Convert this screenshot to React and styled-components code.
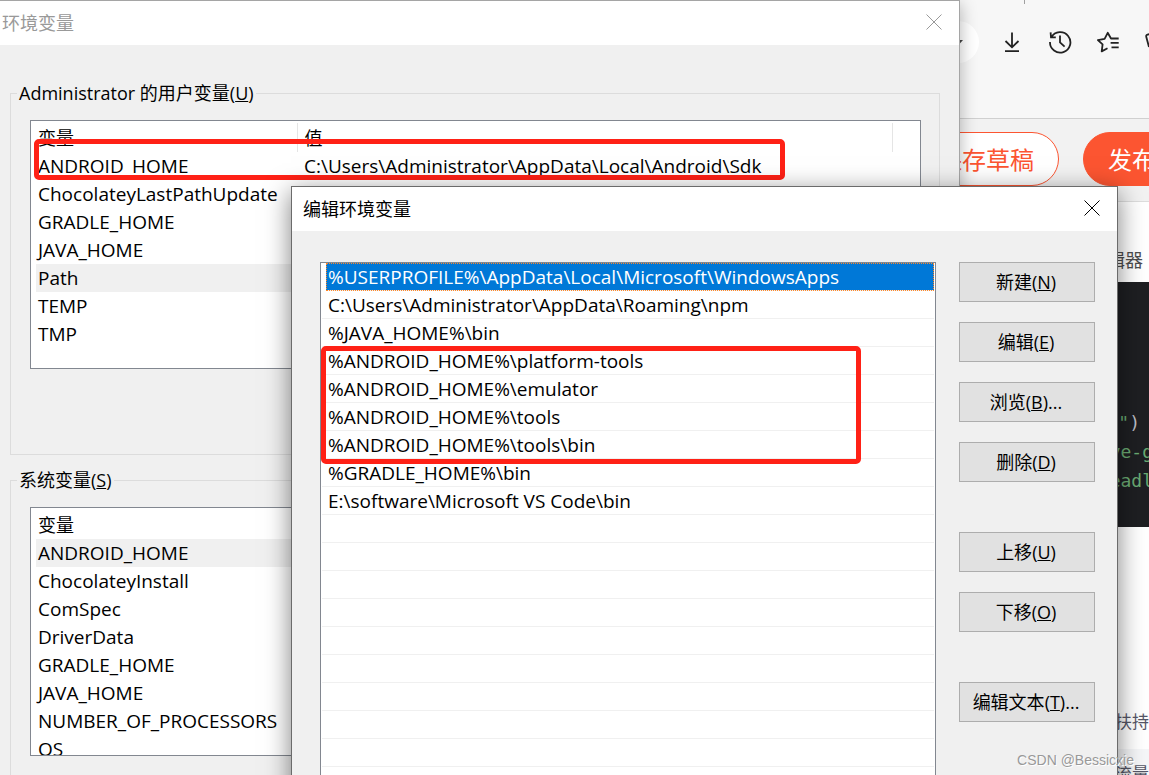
import React from 'react'
import styled, { createGlobalStyle } from 'styled-components'

const Global = createGlobalStyle`
  * {
    box-sizing: border-box;
  }
  body {
    margin: 0;
    color: #000;
    font-size: 18px;
    font-family: 'Open Sans', 'Noto Sans CJK SC', sans-serif;
  }
  button {
    font: inherit;
    color: inherit;
    cursor: pointer;
  }
`

const userVars = [
  ['ANDROID_HOME', 'C:\\Users\\Administrator\\AppData\\Local\\Android\\Sdk'],
  ['ChocolateyLastPathUpdate', ''],
  ['GRADLE_HOME', ''],
  ['JAVA_HOME', ''],
  ['Path', ''],
  ['TEMP', ''],
  ['TMP', ''],
]

const systemVars = [
  ['ANDROID_HOME', ''],
  ['ChocolateyInstall', ''],
  ['ComSpec', ''],
  ['DriverData', ''],
  ['GRADLE_HOME', ''],
  ['JAVA_HOME', ''],
  ['NUMBER_OF_PROCESSORS', ''],
  ['OS', ''],
]

const paths = [
  '%USERPROFILE%\\AppData\\Local\\Microsoft\\WindowsApps',
  'C:\\Users\\Administrator\\AppData\\Roaming\\npm',
  '%JAVA_HOME%\\bin',
  '%ANDROID_HOME%\\platform-tools',
  '%ANDROID_HOME%\\emulator',
  '%ANDROID_HOME%\\tools',
  '%ANDROID_HOME%\\tools\\bin',
  '%GRADLE_HOME%\\bin',
  'E:\\software\\Microsoft VS Code\\bin',
]

const actions = [
  { label: '新建', hotkey: 'N' },
  { label: '编辑', hotkey: 'E' },
  { label: '浏览', hotkey: 'B', more: true },
  { label: '删除', hotkey: 'D' },
  { label: '上移', hotkey: 'U', group: true },
  { label: '下移', hotkey: 'O' },
  { label: '编辑文本', hotkey: 'T', more: true, group: true },
]

const Hotkey = ({ label, hotkey, more }) => (
  <>
    {label}(<u>{hotkey}</u>){more && '...'}
  </>
)

const CloseIcon = () => (
  <svg width="16" height="16" viewBox="0 0 16 16" fill="none" stroke="currentColor">
    <path d="M.5 .5 15.5 15.5M15.5 .5 .5 15.5" />
  </svg>
)

const CaretIcon = () => (
  <svg width="8" height="5" viewBox="0 0 8 5" fill="#444">
    <path d="M0 0H8L4 4.5Z" />
  </svg>
)

const DownloadIcon = () => (
  <svg width="24" height="24" viewBox="0 0 24 24" fill="none" stroke="currentColor" strokeWidth="1.8">
    <path d="M12 2.5V17M5.5 11 12 17.3 18.5 11M5 21.1H19" />
  </svg>
)

const HistoryIcon = () => (
  <svg width="24" height="24" viewBox="0 0 24 24" fill="none" stroke="currentColor" strokeWidth="1.8">
    <path d="M3.4 7.2A10.2 10.2 0 1 1 2 12M2.6 2.4 3 7.4H7.8M12 5.6V12.4L16.6 16.6" />
  </svg>
)

const FavoritesIcon = () => (
  <svg width="24" height="24" viewBox="0 0 24 24" fill="none" stroke="currentColor" strokeWidth="1.8" strokeLinejoin="round">
    <path d="M22.7 8.5H15L11.7 2.8 8.6 8.8 1.9 10.1 6.6 14.4 5.7 21.4 11.5 18.3M14.6 12.9H22.7M15.5 17.4H22.7" />
  </svg>
)

const CollectionIcon = () => (
  <svg width="24" height="24" viewBox="0 0 24 24" fill="none" stroke="currentColor" strokeWidth="1.8">
    <path d="M5 17 2.3 7Q1.8 5 3.5 4.6L12 2.5M7 6H20V20H8Z" />
  </svg>
)

const VarList = ({ rows, selected }) => (
  <VarTable>
    <thead>
      <tr>
        <th>变量</th>
        <th>值</th>
        <th />
      </tr>
    </thead>
    <tbody>
      {rows.map(([name, value]) => (
        <VarRow key={name} $selected={name === selected}>
          <td>{name}</td>
          <td>{value}</td>
          <td />
        </VarRow>
      ))}
    </tbody>
  </VarTable>
)

const App = () => {
  return (
    <Desktop>
      <Global />
      <Browser>
        <TabStrip />
        <Toolbar>
          <Address><CaretIcon /></Address>
          <ToolButton aria-label="Downloads"><DownloadIcon /></ToolButton>
          <ToolButton aria-label="History"><HistoryIcon /></ToolButton>
          <ToolButton aria-label="Favorites"><FavoritesIcon /></ToolButton>
          <ToolButton aria-label="Collections"><CollectionIcon /></ToolButton>
        </Toolbar>
        <EditorBar>
          <PillButton>保存草稿</PillButton>
          <PillButton $primary>发布文章</PillButton>
        </EditorBar>
        <EditorTab>编辑器</EditorTab>
        <Code>
          <div><span>e"</span>)</div>
          <div><span>ve-g</span></div>
          <div><span>eadl</span></div>
        </Code>
        <Aside>
          <p>扶持</p>
          <p>流量</p>
        </Aside>
      </Browser>

      <EnvWindow>
        <TitleBar $inactive>
          环境变量
          <CloseButton aria-label="关闭"><CloseIcon /></CloseButton>
        </TitleBar>
        <EnvBody>
          <Group>
            <legend><Hotkey label="Administrator 的用户变量" hotkey="U" /></legend>
            <ListBox><VarList rows={userVars} selected="Path" /></ListBox>
          </Group>
          <Group>
            <legend><Hotkey label="系统变量" hotkey="S" /></legend>
            <ListBox><VarList rows={systemVars} selected="ANDROID_HOME" /></ListBox>
          </Group>
        </EnvBody>
        <HomeMark />
      </EnvWindow>

      <EditWindow>
        <TitleBar>
          编辑环境变量
          <CloseButton aria-label="关闭"><CloseIcon /></CloseButton>
        </TitleBar>
        <EditBody>
          <PathList>
            {paths.map((path, i) => (
              <PathRow key={path} $selected={i === 0}>{path}</PathRow>
            ))}
            {Array.from({ length: 12 }, (_, i) => <PathRow key={i} />)}
            <PathMark />
          </PathList>
          <Actions>
            {actions.map(({ group, ...item }) => (
              <ActionButton key={item.hotkey} $group={group}>
                <Hotkey {...item} />
              </ActionButton>
            ))}
          </Actions>
        </EditBody>
      </EditWindow>

      <Watermark>CSDN @Bessicxie</Watermark>
    </Desktop>
  )
}

const Desktop = styled.main`
  position: relative;
  height: 100vh;
  overflow: hidden;
`

const Browser = styled.section`
  min-height: 100%;
  display: flex;
  flex-direction: column;
  background: #fff;
`

const TabStrip = styled.div`
  height: 4px;
  padding-right: 124px;
  background: #f7f7f7;

  &::after {
    content: '';
    display: block;
    height: 4px;
    border-right: 1px solid #a0a0a0;
  }
`

const Toolbar = styled.div`
  display: flex;
  align-items: flex-start;
  height: 115px;
  padding-top: 17px;
  margin-right: -31px;
  background: #f7f7f7;
  border-bottom: 1px solid #d0d0d0;
  color: #222;
`

const Address = styled.div`
  flex: 1;
  display: flex;
  align-items: center;
  justify-content: flex-end;
  height: 42px;
  margin-right: 9px;
  padding-right: 16px;
  background: #fff;
  border-radius: 21px;
`

const ToolButton = styled.button`
  display: grid;
  place-items: center;
  width: 48px;
  height: 42px;
  padding: 0;
  border: 0;
  background: none;
`

const EditorBar = styled.div`
  display: flex;
  align-items: flex-start;
  justify-content: flex-end;
  gap: 24px;
  height: 83px;
  padding-top: 13px;
  margin-right: -80px;
  background: #f2f2f2;
  border-bottom: 1px solid #ddd;
`

const PillButton = styled.button`
  height: 54px;
  padding: 0 24px 2px;
  font-size: 24px;
  border: 1px solid #fc5531;
  border-radius: 27px;
  color: ${({ $primary }) => ($primary ? '#fff' : '#fc5531')};
  background: ${({ $primary }) => ($primary ? '#fc5531' : '#fff')};
`

const EditorTab = styled.div`
  height: 80px;
  padding: 44px 6px 0;
  line-height: 28px;
  text-align: right;
  color: #4d4d4d;
`

const Code = styled.div`
  height: 245px;
  margin-right: -4px;
  padding-top: 126px;
  background: #1e1f22;
  color: #bcbec4;
  font: 18px/29px 'DejaVu Sans Mono', monospace;
  text-align: right;

  div:first-child {
    padding-right: 13px;
  }
  span {
    color: #6aab73;
  }
`

const Aside = styled.aside`
  padding-top: 180px;
  font-size: 17px;
  text-align: right;
  color: #555666;

  p {
    margin: 0;
    line-height: 30px;
  }
  p + p {
    margin-top: 12px;
    padding: 10px 0;
    background: #f5f6f8;
  }
`

const EnvWindow = styled.section`
  position: absolute;
  top: 0;
  left: 0;
  width: 960px;
  background: #f0f0f0;
  border: 1px solid #a5a5a5;
  border-left: 0;
  box-shadow: 0 4px 16px rgba(0, 0, 0, 0.3);
`

const EditWindow = styled.section`
  position: absolute;
  top: 186px;
  left: 291px;
  width: 827px;
  background: #f0f0f0;
  border: 1px solid #6b6b6b;
  box-shadow: 0 6px 24px rgba(0, 0, 0, 0.5);

  header {
    padding-left: 11px;
  }
`

const TitleBar = styled.header`
  display: flex;
  justify-content: space-between;
  align-items: center;
  height: 44px;
  padding: 0 17px 2px 2px;
  background: #fff;
  color: ${({ $inactive }) => ($inactive ? '#999' : '#000')};
`

const CloseButton = styled.button`
  display: grid;
  padding: 0;
  border: 0;
  background: none;
`

const EnvBody = styled.div`
  display: flex;
  flex-direction: column;
  gap: 11px;
  padding: 34px 19px 24px 10px;
`

const Group = styled.fieldset`
  height: 376px;
  margin: 0;
  min-width: 0;
  padding: 13px 18px 0 19px;
  border: 1px solid #dcdcdc;

  legend {
    margin-left: -13px;
    padding: 0 2px;
    line-height: 28px;
  }
`

const ListBox = styled.div`
  height: 249px;
  padding: 2px 0 0 5px;
  overflow: hidden;
  background: #fff;
  border: 1px solid #828790;
`

const VarTable = styled.table`
  width: 100%;
  table-layout: fixed;
  border-collapse: collapse;
  line-height: 28px;

  th,
  td {
    padding: 0 0 0 2px;
    font-weight: 400;
    text-align: left;
    white-space: nowrap;
  }
  td {
    font-size: 19px;
  }
  th {
    height: 29px;
    border-right: 1px solid #e5e5e5;
  }
  th:first-child {
    width: 261px;
  }
  th:last-child {
    width: 28px;
    border: 0;
  }
  th + th,
  td + td {
    padding-left: 7px;
  }
`

const VarRow = styled.tr`
  height: 28px;
  background: ${({ $selected }) => ($selected ? '#f0f0f0' : 'transparent')};
`

const EditBody = styled.div`
  display: flex;
  align-items: flex-start;
  gap: 23px;
  padding: 31px 22px 24px 28px;
`

const PathList = styled.ul`
  position: relative;
  flex: 1;
  margin: 0;
  padding: 0 1px;
  list-style: none;
  background: #fff;
  border: 1px solid #828790;
`

const PathRow = styled.li`
  height: 28px;
  padding-left: 6px;
  font-size: 19px;
  line-height: 29px;
  white-space: nowrap;
  border-bottom: 1px solid #f0f0f0;
  ${({ $selected }) =>
    $selected &&
    `
    margin-left: 4px;
    padding-left: 2px;
    color: #fff;
    background: #0078d7;
    outline: 1px dotted #ff8728;
    outline-offset: -1px;
  `}
`

const Actions = styled.div`
  display: flex;
  flex-direction: column;
  gap: 20px;
  width: 136px;
`

const ActionButton = styled.button`
  height: 40px;
  margin-top: ${({ $group }) => ($group ? '30px' : '0')};
  padding: 0 2px 2px 0;
  background: #e1e1e1;
  border: 1px solid #adadad;
`

const Mark = styled.div`
  position: absolute;
  border: 5px solid #ff2116;
  border-radius: 5px;
  pointer-events: none;
`

const HomeMark = styled(Mark)`
  top: 138px;
  left: 34px;
  width: 751px;
  height: 41px;
`

const PathMark = styled(Mark)`
  top: 83px;
  left: 0;
  width: 540px;
  height: 118px;
`

const Watermark = styled.div`
  position: absolute;
  right: 15px;
  bottom: 4px;
  font: 14px/22px 'Liberation Sans', sans-serif;
  color: #999;
  text-shadow: 1px 1px 0 #fff;
`

export default App
